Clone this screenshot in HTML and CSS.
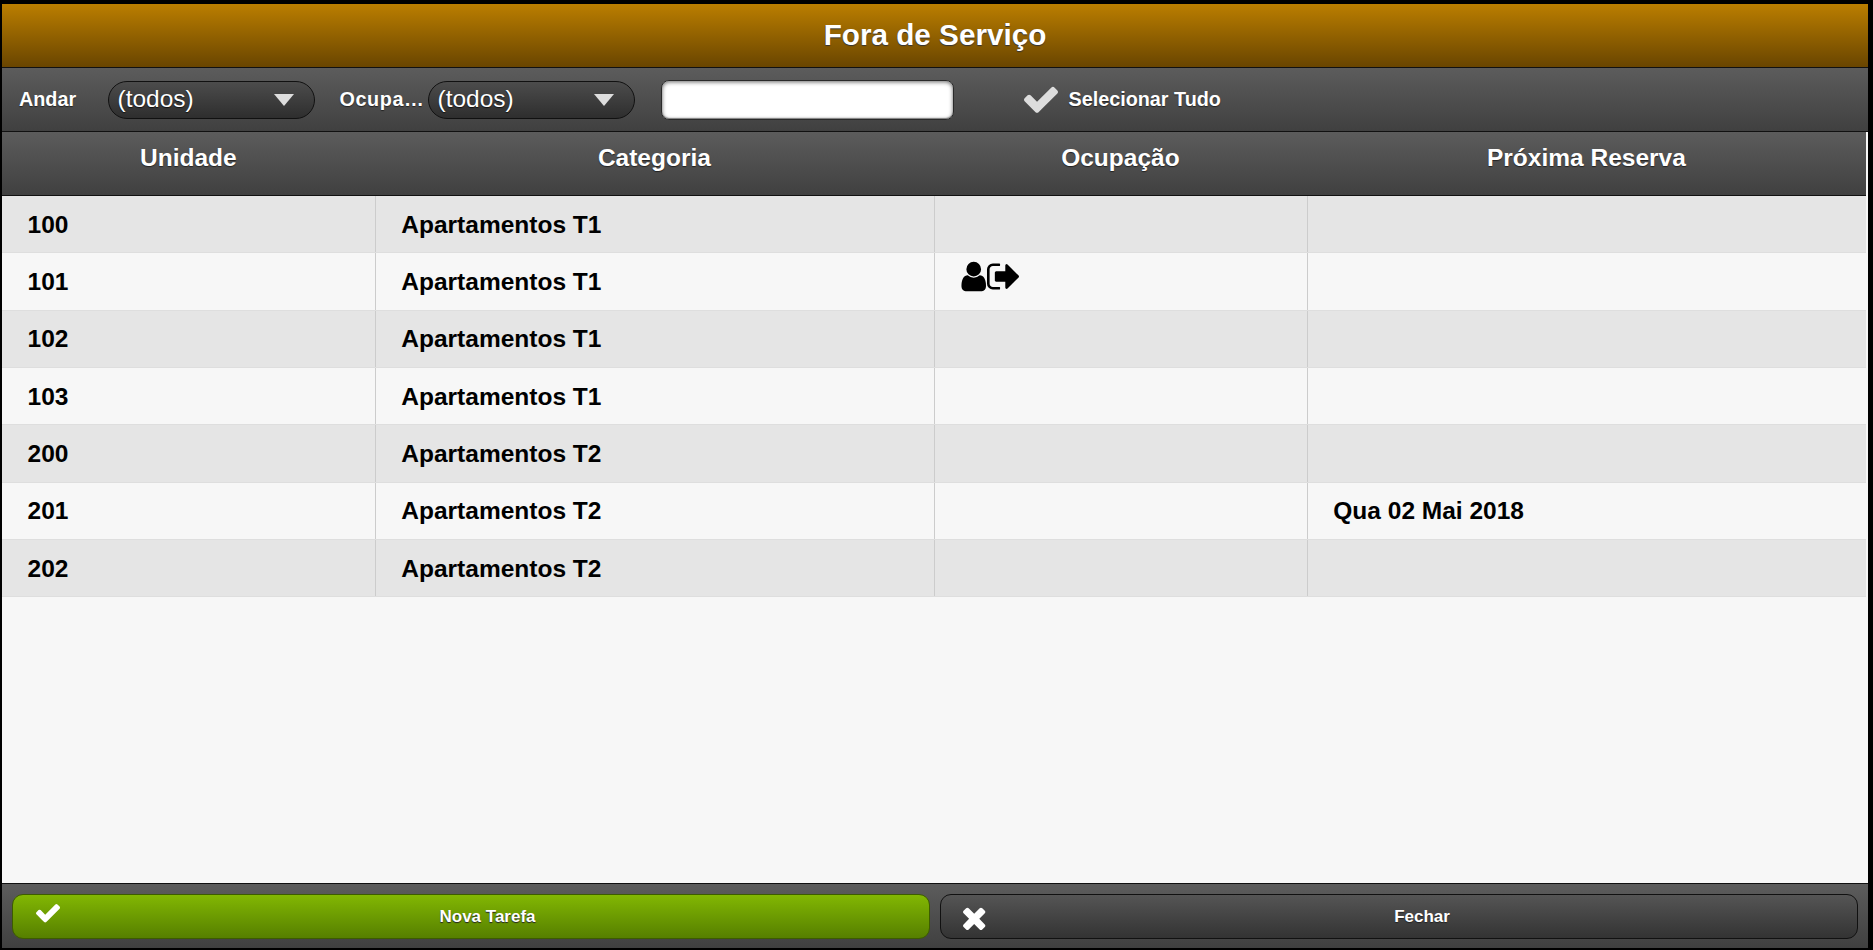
FILE: index.html
```html
<!DOCTYPE html>
<html lang="pt">
<head>
<meta charset="utf-8">
<title>Fora de Serviço</title>
<link rel="stylesheet" href="styles.css">
</head>
<body>
<div class="app">
  <header class="title-bar"><h1>Fora de Serviço</h1></header>
  <div class="toolbar">
    <span class="label label-floor">Andar</span>
    <div class="select"><span>(todos)</span><i class="arrow"></i></div>
    <span class="label label-occ">Ocupa…</span>
    <div class="select"><span>(todos)</span><i class="arrow"></i></div>
    <div class="search"></div>
    <svg class="icon-selall" viewBox="121 298 1550 1230"><path d="M1671 566q0 40-28 68l-724 724-136 136q-28 28-68 28t-68-28l-136-136-362-362q-28-28-28-68t28-68l136-136q28-28 68-28t68 28l294 295 656-657q28-28 68-28t68 28l136 136q28 28 28 68z"/></svg>
    <span class="label">Selecionar Tudo</span>
  </div>
  <main class="list">
    <div class="row head">
      <div class="cell">Unidade</div><div class="cell">Categoria</div><div class="cell">Ocupação</div><div class="cell">Próxima Reserva</div>
    </div>
    <div class="row"><div class="cell">100</div><div class="cell">Apartamentos T1</div><div class="cell"></div><div class="cell"></div></div>
    <div class="row"><div class="cell">101</div><div class="cell">Apartamentos T1</div><div class="cell occ">
      <svg class="icon-user" viewBox="128 128 1408 1536"><path d="M1536 1399q0 109-62.5 187t-150.5 78h-854q-88 0-150.5-78t-62.5-187q0-85 8.5-160.5t31.5-152 58.5-131 94-89 134.5-34.5q131 128 313 128t313-128q76 0 134.5 34.5t94 89 58.5 131 31.5 152 8.5 160.5zm-256-887q0 159-112.5 271.5t-271.5 112.5-271.5-112.5-112.5-271.5 112.5-271.5 271.5-112.5 271.5 112.5 112.5 271.5z"/></svg>
      <svg class="icon-out" viewBox="64 256 1568 1280"><path d="M704 1440q0 4 1 20t.5 26.5-3 23.5-10 19.5-20.5 6.5h-320q-119 0-203.5-84.5t-84.5-203.5v-704q0-119 84.5-203.5t203.5-84.5h320q13 0 22.5 9.5t9.5 22.5q0 4 1 20t.5 26.5-3 23.5-10 19.5-20.5 6.5h-320q-66 0-113 47t-47 113v704q0 66 47 113t113 47h312l11.5 1 11.5 3 8 5.5 7 9 2 13.5zm928-544q0 26-19 45l-544 544q-19 19-45 19t-45-19-19-45v-288h-448q-26 0-45-19t-19-45v-384q0-26 19-45t45-19h448v-288q0-26 19-45t45-19 45 19l544 544q19 19 19 45z"/></svg>
    </div><div class="cell"></div></div>
    <div class="row"><div class="cell">102</div><div class="cell">Apartamentos T1</div><div class="cell"></div><div class="cell"></div></div>
    <div class="row"><div class="cell">103</div><div class="cell">Apartamentos T1</div><div class="cell"></div><div class="cell"></div></div>
    <div class="row"><div class="cell">200</div><div class="cell">Apartamentos T2</div><div class="cell"></div><div class="cell"></div></div>
    <div class="row"><div class="cell">201</div><div class="cell">Apartamentos T2</div><div class="cell"></div><div class="cell">Qua 02 Mai 2018</div></div>
    <div class="row"><div class="cell">202</div><div class="cell">Apartamentos T2</div><div class="cell"></div><div class="cell"></div></div>
  </main>
  <footer class="footer">
    <button class="btn btn-green" type="button">
      <svg class="btn-icon" viewBox="121 298 1550 1230"><path d="M1671 566q0 40-28 68l-724 724-136 136q-28 28-68 28t-68-28l-136-136-362-362q-28-28-28-68t28-68l136-136q28-28 68-28t68 28l294 295 656-657q28-28 68-28t68 28l136 136q28 28 28 68z"/></svg>
      <span class="btn-text">Nova Tarefa</span>
    </button>
    <button class="btn btn-dark" type="button">
      <svg class="btn-icon" viewBox="282 274 1208 1280"><path d="M1490 1322q0 40-28 68l-136 136q-28 28-68 28t-68-28l-294-294-294 294q-28 28-68 28t-68-28l-136-136q-28-28-28-68t28-68l294-294-294-294q-28-28-28-68t28-68l136-136q28-28 68-28t68 28l294 294 294-294q28-28 68-28t68 28l136 136q28 28 28 68t-28 68l-294 294 294 294q28 28 28 68z"/></svg>
      <span class="btn-text">Fechar</span>
    </button>
  </footer>
</div>
</body>
</html>
```

FILE: styles.css
```css
* { box-sizing: border-box; }
html, body { margin: 0; height: 100%; background: #000; overflow: hidden; }
body { font-family: "Liberation Sans", Arial, sans-serif; }

.app {
  display: flex;
  flex-direction: column;
  height: 100vh;
  padding: 4px 5px 2px 2px;
}

.title-bar {
  height: 64px;
  flex: none;
  display: flex;
  align-items: center;
  justify-content: center;
  background: linear-gradient(#bb7e00, #694500);
  border-bottom: 1px solid #111;
}
.title-bar h1 {
  margin: 0 0 2px;
  font-size: 29.7px;
  font-weight: bold;
  color: #fff;
  text-shadow: 0 1px 1px #333;
}

.toolbar {
  height: 64px;
  flex: none;
  display: flex;
  align-items: center;
  padding-left: 17px;
  background: linear-gradient(#5c5c5c, #404040);
  border-bottom: 1px solid #111;
}
.label {
  font-size: 19.8px;
  font-weight: bold;
  color: #fff;
  text-shadow: 0 1px 1px #222;
  white-space: nowrap;
}
.label-floor { width: 88.5px; }
.label-occ {
  width: 88px;
  margin-left: 25px;
  letter-spacing: 0.6px;
}
.select {
  width: 207px;
  height: 38px;
  display: flex;
  align-items: center;
  justify-content: space-between;
  padding: 0 20px 2px 9px;
  border: 1px solid #111;
  border-radius: 19px;
  background: linear-gradient(#4c4c4c, #2e2e2e);
  color: #fff;
  font-size: 24.5px;
  text-shadow: 0 1px 1px #111;
}
.arrow {
  width: 0;
  height: 0;
  margin-top: 2px;
  border-left: 10px solid transparent;
  border-right: 10px solid transparent;
  border-top: 12px solid #ddd;
}
.search {
  width: 293px;
  height: 40px;
  margin-left: 26px;
  border: 1px solid #2a2a2a;
  border-radius: 8px;
  background: #fff;
  box-shadow: inset 0 1px 4px #666, inset 0 -1px 1px #888;
}
.icon-selall {
  width: 34px;
  height: 27px;
  margin: 0 11px 0 70px;
  fill: #ddd;
}

.list {
  flex: 1;
  min-height: 0;
  background: #f7f7f7;
}
.row {
  display: grid;
  grid-template-columns: 2fr 3fr 2fr 3fr;
  width: 1864px;
  height: 57.33px;
  background: #f7f7f7;
  border-bottom: 1px solid #dedede;
  font-size: 24.5px;
  font-weight: bold;
  color: #000;
}
.row:nth-child(even) { background: #e5e5e5; }
.cell {
  display: flex;
  align-items: center;
  padding: 1px 0 0 25.5px;
  border-left: 1px solid #ccc;
}
.cell:first-child { border-left: 0; }
.row.head {
  height: 64px;
  background: linear-gradient(#5c5c5c, #404040);
  border-bottom: 1px solid #111;
  color: #fff;
  text-shadow: 0 1px 1px #222;
}
.head .cell {
  justify-content: center;
  padding: 0 0 11px;
  border-left: 0;
}
.cell.occ { padding: 0 0 10px 24px; }
.icon-user { width: 27px; height: 31px; }
.icon-out { width: 32px; height: 27px; margin-left: 1px; }

.footer {
  flex: none;
  height: 65px;
  display: grid;
  grid-template-columns: 1fr 1fr;
  gap: 10px;
  padding: 10px 10px 9px;
  background: linear-gradient(#5c5c5c, #404040);
  border-top: 1px solid #111;
}
.btn {
  display: flex;
  align-items: center;
  border-radius: 11px;
  font: bold 17px "Liberation Sans", Arial, sans-serif;
  color: #fff;
  text-shadow: 0 1px 1px #222;
}
.btn-green {
  padding: 0 14px 0 23px;
  border: 1px solid #3d5c00;
  background: linear-gradient(#82b703, #567f00);
}
.btn-dark {
  padding: 0 0 0 21px;
  border: 1px solid #111;
  background: linear-gradient(#555, #333);
}
.btn-icon {
  width: 24px;
  height: 24px;
  fill: #fff;
  flex: none;
}
.btn-green .btn-icon { margin-top: -7px; }
.btn-dark .btn-icon { margin-top: 2px; }
.btn-text { flex: 1; text-align: center; }
.btn-dark .btn-text { padding-left: 1px; }
```
